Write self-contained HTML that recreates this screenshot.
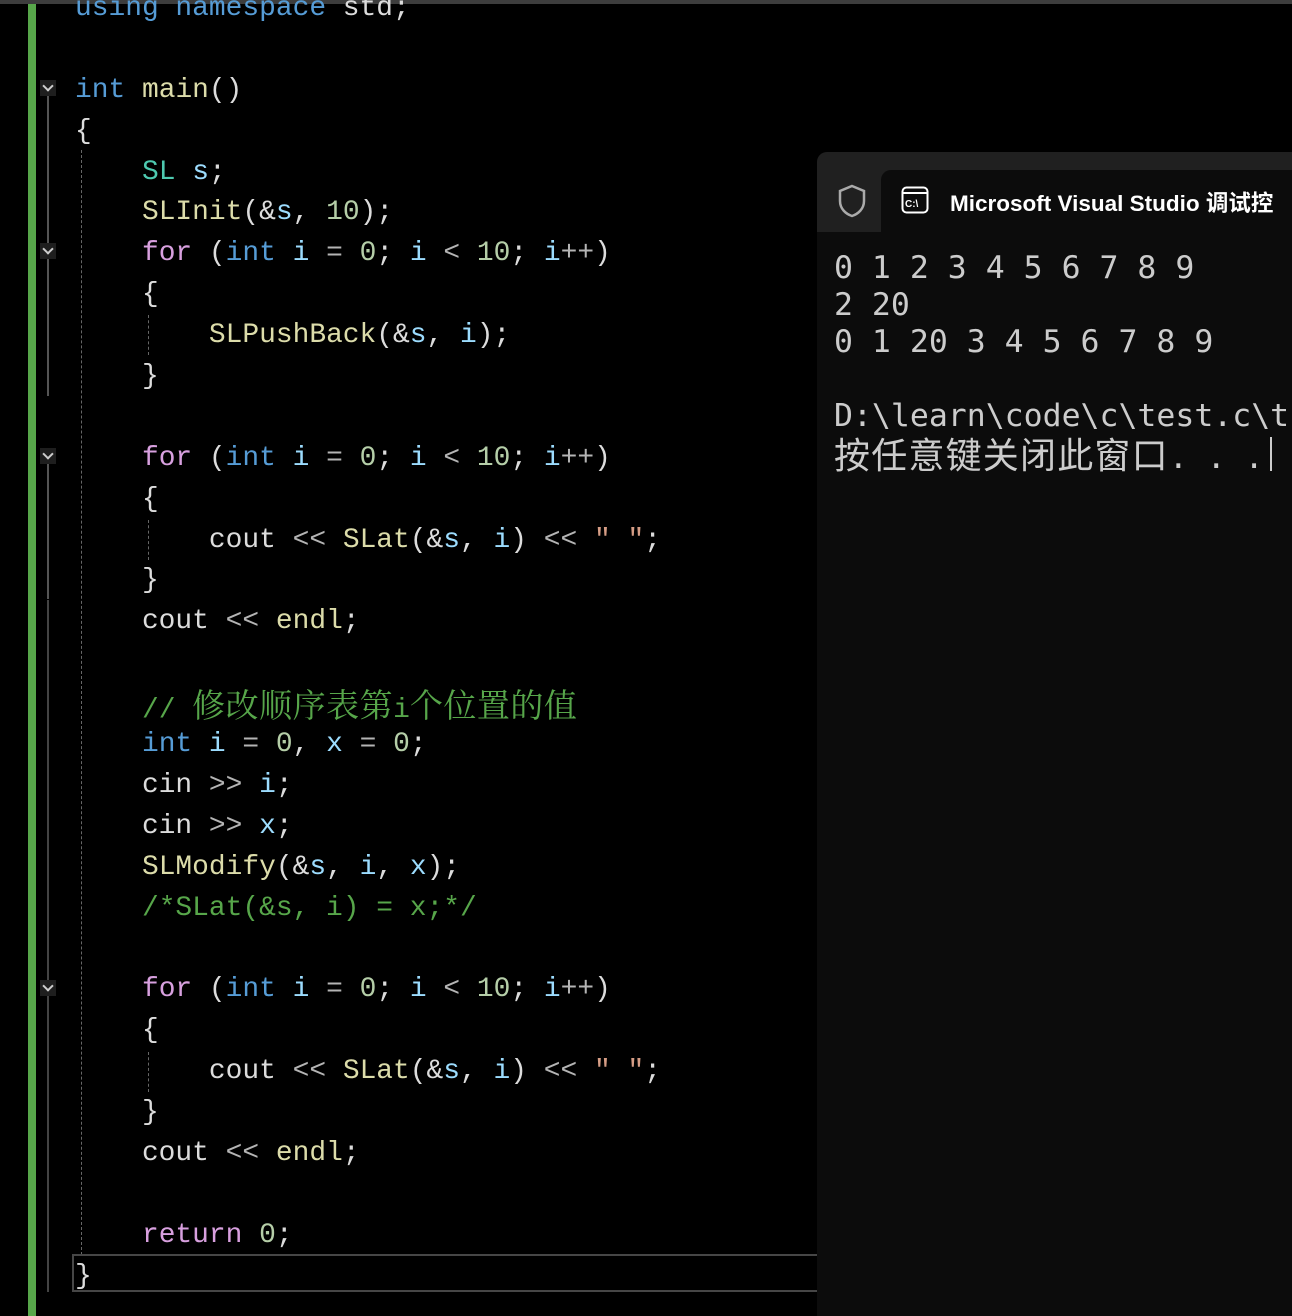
<!DOCTYPE html>
<html><head><meta charset="utf-8"><style>
body{margin:0;width:1292px;height:1316px;background:#000;overflow:hidden;position:relative;font-family:"Liberation Mono","Noto Serif CJK SC",monospace}
.topbar{position:absolute;left:0;top:0;width:1292px;height:4px;background:#3d3d3d}
.green{position:absolute;left:28px;top:4px;width:8px;height:1312px;background:#57a64a}
.code{position:absolute;left:75px;top:-11px;font-size:27.9px;line-height:40.9px;color:#dcdcdc}
.code div{height:40.9px;white-space:pre}
.k{color:#569cd6}.c{color:#d8a0df}.f{color:#dcdcaa}.t{color:#4ec9b0}.v{color:#9cdcfe}.n{color:#b5cea8}.cm{color:#57a64a}.s{color:#d69d85}.o{color:#b4b4b4}
.cj{font-family:"Noto Serif CJK SC",serif;font-size:33px;letter-spacing:0.5px}
.fold{position:absolute;left:40px;width:16px;height:16px;background:#1e1e1e}
.fold::after{content:"";position:absolute;left:4px;top:2px;width:6px;height:6px;border-right:2px solid #ccc;border-bottom:2px solid #ccc;transform:rotate(45deg)}
.vl{position:absolute;width:2px;background:#555}
.dash{position:absolute;width:0;border-left:1px dashed #666}
.curline{position:absolute;left:72px;top:1254px;width:745px;height:34px;border:2px solid #464646;border-right:none}
.con{position:absolute;left:817px;top:152px;width:475px;height:1164px;background:#0c0c0c;border-top-left-radius:10px}
.tb{position:absolute;left:0;top:0;width:475px;height:80px;background:#202020;border-top-left-radius:10px}
.tab{position:absolute;left:64px;top:18px;width:411px;height:62px;background:#0c0c0c;border-top-left-radius:10px}
.title{position:absolute;left:133px;top:34px;color:#fff;font-family:"Liberation Sans","Noto Sans CJK SC",sans-serif;font-size:22.5px;font-weight:bold;white-space:nowrap}
.out{position:absolute;left:17px;top:98px;color:#cccccc;font-family:"DejaVu Sans Mono","Noto Sans CJK SC",monospace;font-size:31.5px;line-height:37px}
.out div{height:37px;white-space:pre}
.ocj{font-family:"Noto Sans CJK SC",sans-serif;font-size:36px;letter-spacing:1.2px}
</style></head><body>
<div class="topbar"></div>
<div class="green"></div>
<div class="vl" style="left:47px;top:96px;height:300px"></div>
<div class="vl" style="left:47px;top:464px;height:135px"></div>
<div class="vl" style="left:47px;top:996px;height:135px"></div>
<div class="vl" style="left:47px;top:600px;height:692px;background:#444"></div>
<div class="dash" style="left:81px;top:150px;height:1105px"></div>
<div class="dash" style="left:148px;top:315px;height:40px"></div>
<div class="dash" style="left:148px;top:520px;height:40px"></div>
<div class="dash" style="left:148px;top:1052px;height:40px"></div>
<div class="fold" style="top:80px"></div>
<div class="fold" style="top:243px"></div>
<div class="fold" style="top:448px"></div>
<div class="fold" style="top:980px"></div>
<div class="curline"></div>
<div class="code"><div><span class="k">using namespace</span> std;</div><div> </div><div><span class="k">int</span> <span class="f">main</span>()</div><div>{</div><div>    <span class="t">SL</span> <span class="v">s</span>;</div><div>    <span class="f">SLInit</span>(&amp;<span class="v">s</span>, <span class="n">10</span>);</div><div>    <span class="c">for</span> (<span class="k">int</span> <span class="v">i</span> <span class="o">=</span> <span class="n">0</span>; <span class="v">i</span> <span class="o">&lt;</span> <span class="n">10</span>; <span class="v">i</span><span class="o">++</span>)</div><div>    {</div><div>        <span class="f">SLPushBack</span>(&amp;<span class="v">s</span>, <span class="v">i</span>);</div><div>    }</div><div> </div><div>    <span class="c">for</span> (<span class="k">int</span> <span class="v">i</span> <span class="o">=</span> <span class="n">0</span>; <span class="v">i</span> <span class="o">&lt;</span> <span class="n">10</span>; <span class="v">i</span><span class="o">++</span>)</div><div>    {</div><div>        cout <span class="o">&lt;&lt;</span> <span class="f">SLat</span>(&amp;<span class="v">s</span>, <span class="v">i</span>) <span class="o">&lt;&lt;</span> <span class="s">" "</span>;</div><div>    }</div><div>    cout <span class="o">&lt;&lt;</span> <span class="f">endl</span>;</div><div> </div><div>    <span class="cm">// <span class="cj">修改顺序表第</span>i<span class="cj">个位置的值</span></span></div><div>    <span class="k">int</span> <span class="v">i</span> <span class="o">=</span> <span class="n">0</span>, <span class="v">x</span> <span class="o">=</span> <span class="n">0</span>;</div><div>    cin <span class="o">&gt;&gt;</span> <span class="v">i</span>;</div><div>    cin <span class="o">&gt;&gt;</span> <span class="v">x</span>;</div><div>    <span class="f">SLModify</span>(&amp;<span class="v">s</span>, <span class="v">i</span>, <span class="v">x</span>);</div><div>    <span class="cm">/*SLat(&amp;s, i) = x;*/</span></div><div> </div><div>    <span class="c">for</span> (<span class="k">int</span> <span class="v">i</span> <span class="o">=</span> <span class="n">0</span>; <span class="v">i</span> <span class="o">&lt;</span> <span class="n">10</span>; <span class="v">i</span><span class="o">++</span>)</div><div>    {</div><div>        cout <span class="o">&lt;&lt;</span> <span class="f">SLat</span>(&amp;<span class="v">s</span>, <span class="v">i</span>) <span class="o">&lt;&lt;</span> <span class="s">" "</span>;</div><div>    }</div><div>    cout <span class="o">&lt;&lt;</span> <span class="f">endl</span>;</div><div> </div><div>    <span class="c">return</span> <span class="n">0</span>;</div><div>}</div></div>
<div class="con">
<div class="tb"></div>
<div class="tab"></div>
<svg style="position:absolute;left:20px;top:32px" width="30" height="34" viewBox="0 0 30 34"><path d="M15 2 L27 7 V17 C27 25 21 30 15 32 C9 30 3 25 3 17 V7 Z" fill="none" stroke="#aaa" stroke-width="2.5"/></svg>
<svg style="position:absolute;left:84px;top:34px" width="28" height="28" viewBox="0 0 28 28"><rect x="1.5" y="1.5" width="25" height="25" rx="4" fill="none" stroke="#fff" stroke-width="2"/><line x1="1.5" y1="7" x2="26.5" y2="7" stroke="#fff" stroke-width="2"/><text x="4" y="21" fill="#fff" font-size="10" font-family="Liberation Sans" font-weight="bold">C:\</text></svg>
<div class="title">Microsoft Visual Studio 调试控</div>
<div class="out"><div>0 1 2 3 4 5 6 7 8 9</div><div>2 20</div><div>0 1 20 3 4 5 6 7 8 9</div><div> </div><div>D:\learn\code\c\test.c\t</div><div><span class="ocj">按任意键关闭此窗口</span>. . .</div></div>
<div style="position:absolute;left:453px;top:285px;width:2px;height:34px;background:#ccc"></div>
</div>
</body></html>
